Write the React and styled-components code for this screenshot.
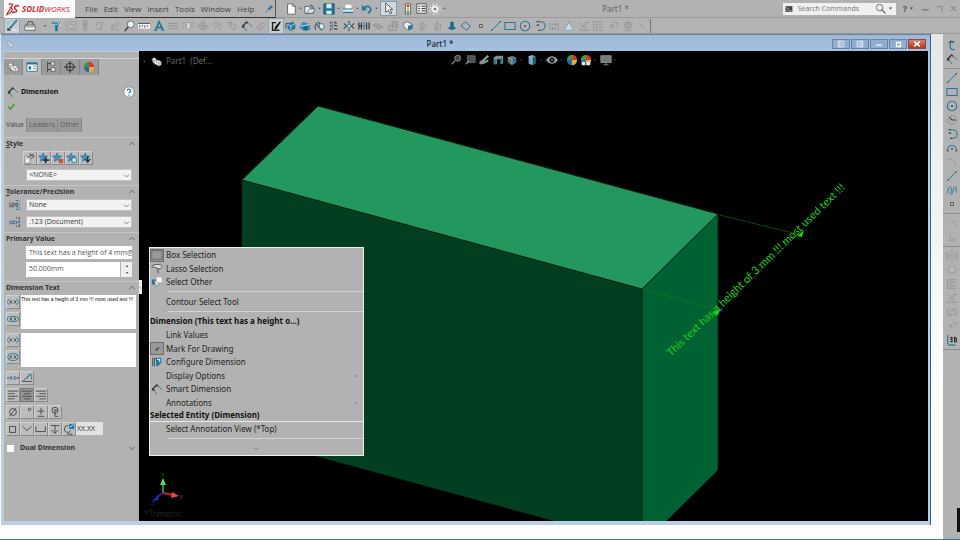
import React from "react";
import styled, { createGlobalStyle, css } from "styled-components";

const blue = "#20789c";
const ink = "#3b3f44";
const faint = "#929292";

// every glyph is drawn on a 14 x 14 grid
const stroke = (d, color = ink, width = 1) => (
  <path d={d} fill="none" stroke={color} strokeWidth={width} />
);

const star = (
  <path
    d="M6 1l1.500 3.500 4 .3-3 2.500.9 4L6 9 2.600 11.300l.9-4L.5 4.800l4-.3z"
    fill="#3e93c0"
    stroke="#23658a"
    strokeWidth=".6"
  />
);

const ball = (
  <>
    <path d="M7 7V1a6 6 0 0 0-6 6z" fill="#3e9b45" />
    <path d="M7 7h6a6 6 0 0 0-6-6z" fill="#d33b2c" />
    <path d="M7 7v6a6 6 0 0 0 6-6z" fill="#e2b23a" />
    <path d="M7 7H1a6 6 0 0 0 6 6z" fill="#2d62b8" />
  </>
);

const glyphs = {
  sketch: (
    <>
      <path d="M1 2h12v1H3v7H1z" fill="#9ec7d8" />
      {stroke("M12 1L5 9", "#2b84ab", 2)}
      {stroke("M2 12l4-4M2 10v2h3", ink, 1.3)}
      {stroke("M7 12h5", "#f4f4f4", 1.3)}
    </>
  ),
  toolbox: (
    <>
      <path d="M1 6h12v6H1z" fill="#f2f2f2" stroke={ink} strokeWidth=".8" />
      {stroke("M3 6l2-4h5l1 4", ink)}
      {stroke("M2 8h10", "#777")}
    </>
  ),
  filter: (
    <>
      <path d="M1 3h11L9 7v6H6V7z" fill={blue} />
      {stroke("M9 3l4 4M3 5h6", "#d9edf5")}
    </>
  ),
  partOff: (
    <>
      <path d="M1 2h12v10H1z" fill="none" stroke="#a0a0a0" />
      <path d="M3 8c0-3 4-5 5-2 3 0 4 2 2 4H6z" fill="#bdbdbd" stroke={faint} />
    </>
  ),
  stackOff: stroke("M5 1h4v4H5zM5 6h4v6H5zM7 3v8", faint),
  bracketOff: stroke("M4 3h5v8H5M3 11h2M3 6V3", faint),
  pencilOff: stroke("M11 2L4 9l-1 3 3-1 6-7M2 8l4-3M8 12h3", faint),
  search: (
    <>
      <circle cx="9" cy="5" r="4" fill="#e9f0f3" stroke={ink} strokeWidth=".8" />
      {stroke("M6 8l-4 5", ink, 1.8)}
    </>
  ),
  measure: (
    <>
      <path d="M0 4h14v6H0z" fill="#f7f7f7" />
      {stroke("M0 4h14M2 6v3M5 6v2M8 6v3M11 6v2", ink, 1)}
    </>
  ),
  letterA: (
    <>
      {stroke("M3 12L7 2l5 10M4 9h6", blue, 2)}
      {stroke("M1 12h4M9 12h4", blue)}
    </>
  ),
  linesOff: stroke("M1 4h12M1 7h12M1 10h12", faint),
  tagOff: (
    <>
      <path d="M5 3h5v6l-2 3-3-3z" fill="#d4d4d4" stroke={faint} />
      {stroke("M2 3v2M2 7v2M12 3v2M12 7v2", faint)}
    </>
  ),
  crossOff: (
    <>
      <circle cx="7" cy="7" r="4" fill="none" stroke={faint} />
      {stroke("M7 1v12M1 7h12", faint)}
    </>
  ),
  angleOff: stroke("M2 6l5-4 5 5M3 11l7-7M9 9l3 3", faint),
  textOff: stroke("M2 3h5M5 2v5M8 4l4 4M3 8l4-2M7 11l5-2", faint),
  dimension: (
    <>
      {stroke("M7 2L2 7", "#222", 1.3)}
      {stroke("M7 2l6 6", blue)}
      {stroke("M2 7l5 6", blue)}
      <path d="M5 2h3v3zM1 6h3v3H1z" fill={ink} />
    </>
  ),
  eraserOff: stroke("M2 9l6-6 4 3-6 6zM5 6l4 3", faint),
  penBox: (
    <>
      {stroke("M2 3h5M3 3v8M2 12h9", "#222", 1.6)}
      <path d="M13 2L8 10l-3 2 1-4 5-6z" fill="#161616" />
    </>
  ),
  cubeBlue: (
    <>
      <path d="M3 5l5-3 4 2v6l-5 3-4-3z" fill={blue} />
      {stroke("M3 5l4 2 5-3M7 7v5", "#b9dcea")}
      {stroke("M1 4v6M1 4h4", ink)}
    </>
  ),
  cubeSmall: (
    <>
      <path d="M1 6l4-4 8 3v7H5l-4-2z" fill="#3c8fb3" />
      <path d="M5 7h5v5H5z" fill="#1b6485" />
      {stroke("M1 6l4 1 8-2", "#d3eaf3")}
    </>
  ),
  rotate: (
    <>
      {stroke("M2 11a6 6 0 0 1 2-8M5 2l6 8M3 5l6 7", ink, 1.2)}
      <path d="M6 5l4-1 2 4-2 3-3-1z" fill="#e6eff2" stroke={blue} />
    </>
  ),
  pattern: (
    <>
      {stroke("M3 2v2M3 6v2M3 10v2M7 2l3 2M7 6l4 1M7 10l4 1", ink, 1.5)}
      {stroke("M5 3v8", blue)}
    </>
  ),
  explode: (
    <>
      <circle cx="7" cy="7" r="2" fill="#d6e6ec" stroke={blue} />
      {stroke("M1 4l3 3-3 3M13 4l-3 3 3 3M7 1v3M7 10v3", ink, 1.2)}
    </>
  ),
  mirror: (
    <>
      {stroke("M1 3v8M4 3v8M1 7h3M13 3v8M10 3v8", ink, 1.5)}
      {stroke("M7 2v10M5 7h5", blue, 1)}
    </>
  ),
  surfaceOff: <path d="M1 6l4-2 8 4-5 3z" fill="#a3a3a3" stroke={faint} />,
  cubeOff: (
    <>
      <path d="M6 2h6v6H6z" fill="#a5a5a5" stroke={faint} />
      {stroke("M2 6h4v6H2zM6 12h5V8", faint)}
    </>
  ),
  cubeWhite: (
    <>
      <path d="M2 4l4-2 6 3v5l-5 2-5-4z" fill="#e8eef0" stroke={ink} strokeWidth=".7" />
      <path d="M7 7l5-2v5l-5 2z" fill={blue} />
    </>
  ),
  foldOff: stroke("M9 2L4 6l3 2-3 3 5 1M8 3v8M11 5v6", faint),
  bevel: (
    <>
      <path d="M5 2h4v5l3 3-5 2-5-2 3-3z" fill={blue} />
      {stroke("M7 2v9", "#0f4e6e")}
    </>
  ),
  plane: stroke("M6 2l6 5-4 5-7-5z", blue, 1.1),
  point: (
    <>
      <path d="M5 5h4v4H5z" fill={ink} />
      <path d="M6 6h2v2H6z" fill="#fff" />
    </>
  ),
  line: (
    <>
      {stroke("M2 12L12 2", blue, 1.1)}
      {stroke("M1 12h2M11 2h2", ink)}
    </>
  ),
  rect: stroke("M1 3h12v8H1z", blue, 1.2),
  circle: (
    <>
      <circle cx="7" cy="7" r="5.500" fill="none" stroke={blue} strokeWidth="1.2" />
      <path d="M6 6h2v2H6z" fill={ink} />
    </>
  ),
  ellipse: (
    <>
      <circle cx="7" cy="7" r="5" fill="none" stroke="#777" strokeDasharray="2 1" />
      {stroke("M4 4l3 3h4", ink, 1.4)}
    </>
  ),
  arc: (
    <>
      {stroke("M4 2h4a5 5 0 0 1 0 10H6", blue, 1.2)}
      {stroke("M3 2h2M3 6h3M5 12h2", ink, 1.5)}
    </>
  ),
  arcTop: (
    <>
      {stroke("M2 9a5 5 0 0 1 10 0", blue, 1.2)}
      <path d="M1 9h2v2H1zM11 9h2v2h-2zM6 7h2v2H6z" fill="#555" />
    </>
  ),
  filletOff: stroke("M2 4c6-1 9 2 9 7", "#a0978f"),
  spline: stroke("M2 11c0-5 2-9 4-7s-2 8 0 8 3-10 5-9 0 5 1 7", blue, 1.1),
  relateOff: stroke("M2 3v9M12 3v9M4 5h6M4 10h6M8 3l2 2-2 2M6 8l-2 2 2 2", faint),
  triangleDots: (
    <path
      d="M7 2l5 10H2z"
      fill="#c7dde6"
      stroke="#5b9ab5"
      strokeDasharray="1 1"
      strokeWidth="1.3"
    />
  ),
  trimOff: stroke("M2 3l9 8M2 11l9-8M2 12h11M8 3h5", faint),
  offsetOff: stroke("M12 2H2v10h10M12 5H5v4h7", faint),
  arrowOff: stroke("M3 6h4v4M7 6L3 10M8 3h4v4", faint),
  globeOff: (
    <>
      <circle cx="7" cy="6" r="4" fill="#aaa" stroke={faint} />
      {stroke("M3 12h8M5 3l5 5", faint)}
    </>
  ),
  slashOff: stroke("M3 3l8 8", faint),
  cornerOff: stroke("M7 3v1M11 5v6M5 5h6", "#9c9c9c"),
  perpOff: stroke("M5 2v9M2 11h7M10 8v4M8 10h4", "#9c9c9c"),
  mirrorOff: stroke("M1 3v8l4-4zM13 3v8L9 7zM7 1v12", faint),
  sphereOff: (
    <circle cx="7" cy="7" r="4" fill="#b9b9b9" stroke={faint} />
  ),
  sketch3d: (
    <>
      {stroke("M2 1v8c0 2 1 4 3 4h6", blue, 1.3)}
      {stroke("M5 4h2v5H5M5 6h2M10 4v5h2V5z", "#222", 1.2)}
    </>
  ),
  hook: (
    <>
      {stroke("M10 3H5v7c0 2 3 3 5 2", blue, 1.5)}
      {stroke("M3 5l3-3 2 3", ink)}
    </>
  ),
  page: (
    <>
      <path d="M3 1h6l3 3v9H3z" fill="#fbfbfb" stroke={ink} strokeWidth=".8" />
      {stroke("M9 1v3h3", ink, 0.8)}
    </>
  ),
  open: (
    <>
      <path d="M1 4h5l1 2h4v6H1z" fill="#f0f4f6" stroke={ink} strokeWidth=".8" />
      <path d="M3 12l3-5h7l-3 5z" fill="#d5e3e9" stroke={ink} strokeWidth=".6" />
      {stroke("M7 2l4 3", blue, 1.6)}
    </>
  ),
  save: (
    <>
      <path d="M1 1h12v12H1z" fill={blue} stroke="#164e66" />
      <path d="M4 1h6v5H4zM4 9h6v4H4z" fill="#dbe8ee" />
    </>
  ),
  print: (
    <>
      <path d="M4 2h7v5H4z" fill="#fff" />
      <path d="M1 7h12v4H1z" fill="#dfe9ed" />
      {stroke("M1 7h11M1 11h12", blue, 1.3)}
    </>
  ),
  undo: (
    <>
      {stroke("M4 5c7-3 10 3 4 7", blue, 2)}
      <path d="M1 2v7l6-1z" fill={blue} />
    </>
  ),
  cursor: (
    <path
      d="M4 1v10l3-2 2 4 1.500-1-2-4h3z"
      fill="#fff"
      stroke={ink}
      strokeWidth=".9"
    />
  ),
  traffic: (
    <>
      <path d="M4 1h6v12H4z" fill="#e9e9e9" stroke={ink} strokeWidth=".8" />
      <circle cx="7" cy="3.500" r="1.500" fill="#d0271d" />
      <circle cx="7" cy="7" r="1.300" fill="#c9a63b" />
      <circle cx="7" cy="10.500" r="1.500" fill="#2c9a3c" />
    </>
  ),
  list: (
    <>
      <path d="M1 1h12v12H1z" fill="#eee" stroke={ink} />
      {stroke("M3 4h2M3 7h2M3 10h2M7 4h5M7 7h5M7 10h5", ink, 1.3)}
    </>
  ),
  gear: (
    <>
      <circle cx="7" cy="7" r="5" fill="#eee" stroke="#eee" strokeDasharray="2 2" strokeWidth="3" />
      <circle cx="7" cy="7" r="5" fill="none" stroke="#777" strokeDasharray="2 1" />
      <circle cx="7" cy="7" r="1.500" fill="#777" />
    </>
  ),
  pin: (
    <>
      <path d="M8 2l4 4-2 0-2 2v2L4 6h2l2-2z" fill="#2878a4" />
      {stroke("M6 8l-4 4", "#2878a4", 1.2)}
    </>
  ),
  part: (
    <>
      <path
        d="M1 4l3-2 3 2v2l2-1 4 2v4l-3 2-7-4z"
        fill="#f2f2f2"
        stroke="#666"
        strokeWidth=".7"
      />
      {stroke("M1 4l3 2v5M4 6l3-2M7 8l3 1v4M7 6v2M10 9l3-2", "#666", 0.7)}
    </>
  ),
  property: (
    <>
      <path d="M1 2h12v10H1z" fill="#fff" stroke={blue} />
      <path d="M1 2h12v2H1zM3 6h3v4H3z" fill={blue} />
      {stroke("M8 6h4M8 9h4", "#777")}
    </>
  ),
  tree: (
    <>
      {stroke("M3 1v12M3 3h4M3 10h4", ink)}
      <path d="M7 1h4v4H7zM7 8h5v4H7z" fill="#e5e5e5" stroke={ink} strokeWidth=".7" />
    </>
  ),
  target: (
    <>
      <circle cx="7" cy="7" r="4.500" fill="none" stroke="#222" />
      {stroke("M7 0v14M0 7h14", "#222")}
    </>
  ),
  ball,
  check: stroke("M2 7l3 4 7-8", "#36a01f", 2.2),
  help: (
    <>
      <circle cx="7" cy="7" r="6" fill="#f7fbfd" stroke="#6f7a80" strokeWidth=".8" />
      {stroke("M5 5.500c0-3 4-2 4 0C9 7 7 7 7 8.500M7 10v1.500", blue, 1.3)}
    </>
  ),
  chevronUp: stroke("M2 9l5-5 5 5", "#555", 1.3),
  chevronDown: stroke("M2 5l5 5 5-5", "#555", 1.3),
  chevronRight: <path d="M5 3l4 4-4 4z" fill="#555" />,
  caret: <path d="M4.500 5.500h5L7 8.500z" fill="#444" />,
  styleDefault: (
    <>
      <path d="M1 5h6v8H1z" fill="#f2f2f2" stroke="#666" strokeWidth=".7" />
      {stroke("M3 8l8-6M6 2l6 3-4 3", ink)}
    </>
  ),
  starAdd: <>{star}{stroke("M9 6v7M6 9.500h7", "#1e3442", 2)}</>,
  starDel: <>{star}<path d="M8 8h5v5H8z" fill="#d84d35" /></>,
  starSave: <>{star}<path d="M7 7h5v5H7z" fill="#d8edf6" stroke={blue} /></>,
  starLoad: <>{star}{stroke("M9 5v7M6 8l3 4 3-4", "#1e3442", 1.5)}</>,
  tolerance: (
    <>
      {stroke("M1 4v6M3 5h3v2H3v2h3M8 5h2v4H8z", ink, 0.9)}
      {stroke("M8 2h4M12 5v2M8 12h4M12 9v2", blue)}
    </>
  ),
  precision: (
    <>
      {stroke("M1 6h3v3H1zM5 6h4v3H5z", blue, 1)}
      {stroke("M8 2h2M12 1v4M8 12h2M12 9v4M10 7h3", ink, 1)}
    </>
  ),
  parenX: (
    <>
      {stroke("M3 3c-3 3-3 5 0 8M11 3c3 3 3 5 0 8", blue, 1)}
      {stroke("M3 5l3 4M6 5L3 9M8 5l3 4M11 5L8 9", ink, 0.9)}
    </>
  ),
  ovalX: (
    <>
      <rect x="1" y="3" width="12" height="8" rx="4" fill="none" stroke={blue} />
      {stroke("M3 5l3 4M6 5L3 9M8 5l3 4M11 5L8 9", ink, 0.9)}
    </>
  ),
  boxX: (
    <>
      {stroke("M3 4h8M3 10h8M2 4c-2 2-2 4 0 6M12 4c2 2 2 4 0 6", blue, 1)}
      {stroke("M3 5l3 4M6 5L3 9M8 5l3 4M11 5L8 9", ink, 0.9)}
    </>
  ),
  centerX: (
    <>
      {stroke("M0 7h3M11 7h3", ink, 1.2)}
      {stroke("M4 5l2 4M6 5L4 9M8 5l2 4M10 5L8 9", blue, 1)}
    </>
  ),
  offsetText: (
    <>
      {stroke("M1 11h12M3 10l8-8", ink)}
      {stroke("M7 8l3-5h2v6", blue)}
    </>
  ),
  alignLeft: stroke("M1 2.500h12M1 5.500h8M1 8.500h12M1 11.500h8", "#444"),
  alignCenter: stroke("M1 2.500h12M3 5.500h8M1 8.500h12M3 11.500h8", "#444"),
  alignRight: stroke("M1 2.500h12M5 5.500h8M1 8.500h12M5 11.500h8", "#444"),
  diameter: (
    <>
      <circle cx="7" cy="7" r="4" fill="none" stroke={ink} />
      {stroke("M3 12l8-10", ink)}
    </>
  ),
  degree: <circle cx="10" cy="4" r="1.500" fill="none" stroke={ink} />,
  plusMinus: stroke("M7 2v8M3 6h8M3 12h8", ink),
  centerline: (
    <>
      <circle cx="7" cy="5" r="3.500" fill="none" stroke={ink} />
      {stroke("M6 5h4M7 4v8h4", ink)}
    </>
  ),
  square: stroke("M3 4h7v7H3z", ink),
  countersink: stroke("M2 4l5 5 5-5", ink),
  counterbore: stroke("M1 4v6h11V4", ink),
  depth: stroke("M2 3h10M7 3v9M3 8l4 4 4-4", ink),
  more: (
    <>
      {stroke("M6 3a4 4 0 1 0 3 6M5 13h6", ink)}
      <path d="M7 1h6v6H7z" fill={blue} />
      {stroke("M8 5l4-3", "#fff")}
    </>
  ),
  boxSelect: (
    <path d="M1 2h12v10H1z" fill="none" stroke="#333" strokeDasharray="1 1" />
  ),
  lasso: (
    <>
      <path d="M1 4c3-4 13-2 12 0S9 8 7 6 1 6 1 4z" fill="#dfe3e5" stroke={ink} />
      {stroke("M7 6c3 2-1 4 2 6", ink)}
    </>
  ),
  selectOther: (
    <>
      <path d="M1 4h7v6H1z" fill={blue} />
      <path d="M6 1h7v7H6z" fill="#f2f5f6" stroke="#999" strokeWidth=".6" />
      <path d="M4 5l6 5-3 0-1 3z" fill="#fff" stroke="#777" strokeWidth=".6" />
    </>
  ),
  configure: (
    <>
      {stroke("M2 2v10M4 2v10", ink)}
      <path d="M5 2h7v6l-4 4H6V7z" fill={blue} />
      {stroke("M7 4h3v3", "#cfe7f1", 1.4)}
    </>
  ),
  viewSearch: (
    <>
      <circle cx="9" cy="5" r="3.500" fill="#3f464b" stroke="#8d9498" />
      {stroke("M6 8l-4 4", "#8d9498", 1.5)}
    </>
  ),
  viewArea: (
    <>
      <path d="M4 2h9v8H4z" fill="#4c5357" stroke="#888" strokeDasharray="2 1" />
      {stroke("M6 8l-4 4", "#8d9498", 1.5)}
    </>
  ),
  viewPrev: (
    <>
      {stroke("M12 2L2 11", "#9aa2a6", 2.4)}
      <path d="M2 8h6l4-2v3l-6 3H2z" fill="#848d92" />
    </>
  ),
  viewSection: (
    <>
      <path d="M2 4l3-2h8v9l-3 1V6H6v6H2z" fill="#7f8c92" />
      <path d="M3 6h2v6H3zM10 5h2v6h-2z" fill={blue} />
    </>
  ),
  viewCube: (
    <>
      <path d="M2 4l5-2 5 2v6l-5 3-5-3z" fill="#66757c" />
      <path d="M7 6l4-1v5l-4 2z" fill={blue} />
      {stroke("M2 4l5 2v6", "#a8b0b4")}
    </>
  ),
  viewStyle: (
    <>
      <path d="M3 3l4-2 4 2v8l-4 2-4-2z" fill="#6fa2b8" />
      <path d="M7 4l4-1v8l-4 2z" fill="#1e5f7c" />
      {stroke("M3 3l4 1v8", "#c0cacd")}
    </>
  ),
  eye: (
    <>
      <path d="M0 7c4-6 10-6 14 0-4 6-10 6-14 0z" fill="#989fa3" />
      <circle cx="7" cy="7" r="3" fill="#15191c" />
      <circle cx="7" cy="7" r="1" fill="#989fa3" />
    </>
  ),
  scene: (
    <>
      {ball}
      <path d="M2 9h4v4H2zM8 9h4v4H8z" fill="#dfe3e5" />
    </>
  ),
  monitor: (
    <>
      <path d="M1 2h12v8H1z" fill="#73797c" stroke="#929799" />
      {stroke("M7 10v2M4 12.500h6", "#85898c")}
    </>
  ),
  dockLeft: stroke("M2 2h10v10H2zM5 2v10M9 5L7 7l2 2", "#f5f9fc", 1.4),
  dockRight: stroke("M2 2h10v10H2zM9 2v10M5 5l2 2-2 2", "#f5f9fc", 1.4),
  minimize: stroke("M2 9h10", "currentColor", 2),
  maximize: stroke("M3 3h8v8H3z", "currentColor", 2.6),
  restore: stroke("M3 4h8v7", "currentColor", 1.2),
  close: stroke("M3 3l8 8M11 3l-8 8", "currentColor", 1.5),
  closeBold: stroke("M2 3l10 8M12 3L2 11", "currentColor", 2.8),
  terminal: (
    <>
      <path d="M1 2h12v10H1z" fill="#444" />
      {stroke("M3 4l3 3-3 3M7 10h4", "#eee", 1.2)}
    </>
  ),
};

const Svg = styled.svg`
  display: block;
  flex: none;
  width: ${(p) => p.$size}px;
  height: ${(p) => p.$size}px;
`;

const Icon = ({ name, size = 12 }) => (
  <Svg $size={size} viewBox="0 0 14 14" aria-hidden="true">
    {glyphs[name]}
  </Svg>
);

const sketchTools = [
  "partOff", "stackOff", "bracketOff", "pencilOff", "search", "measure",
  "letterA", "linesOff", "tagOff", "crossOff", "angleOff", "textOff",
  "dimension", "eraserOff", "penBox", "cubeBlue", "cubeSmall", "rotate",
  "pattern", "explode", "mirror", "surfaceOff", "cubeOff", "cubeWhite",
  "foldOff", "foldOff", "bevel", "plane", "point", "line", "rect", "circle",
  "arc", "relateOff", "triangleDots", "trimOff", "offsetOff", "arrowOff",
  "globeOff", "slashOff",
];

const sideTools = [
  ["hook", "dimension"],
  ["line", "rect", "circle", "ellipse", "arc", "arcTop", "filletOff", "line", "spline", "point"],
  ["cornerOff", "perpOff"],
  ["mirrorOff", "sphereOff", "offsetOff", "trimOff", "relateOff", "arrowOff", "sketch3d"],
];

const quickTools = ["page", "open", "save", "print", "undo"];
const menus = ["File", "Edit", "View", "Insert", "Tools", "Window", "Help"];
const dimensionText = "This text has a height of 3 mm !!! most used text !!!";

const Section = ({ title, open = true, children }) => (
  <Group>
    <GroupHead>
      <h3>{title}</h3>
      <PlainButton aria-label="Toggle section">
        <Icon name={open ? "chevronUp" : "chevronDown"} size={8} />
      </PlainButton>
    </GroupHead>
    {children}
  </Group>
);

const Picker = ({ label, value }) => (
  <PickerBox>
    <select aria-label={label} defaultValue={value}>
      <option>{value}</option>
    </select>
    <Icon name="chevronDown" size={7} />
  </PickerBox>
);

const Tools = ({ names, pressed }) => (
  <ToolRow>
    {names.map((name) => (
      <ToolButton key={name} aria-label={name} $pressed={name === pressed}>
        <Icon name={name} size={12} />
      </ToolButton>
    ))}
  </ToolRow>
);

const PropertyPanel = () => (
  <Panel>
    <Grip />
    <PanelTabs>
      {["part", "property", "tree", "target", "ball"].map((name) => (
        <PanelTab key={name} aria-label={name} $active={name === "property"}>
          <Icon name={name} />
        </PanelTab>
      ))}
    </PanelTabs>
    <PanelTitle>
      <Icon name="dimension" />
      <h2>Dimension</h2>
      <PlainButton aria-label="Help">
        <Icon name="help" />
      </PlainButton>
    </PanelTitle>
    <Accept aria-label="OK">
      <Icon name="check" size={9} />
    </Accept>
    <ValueTabs>
      <ValueTab $active>Value</ValueTab>
      <ValueTab>Leaders</ValueTab>
      <ValueTab>Other</ValueTab>
    </ValueTabs>

    <Section title={<><u>S</u>tyle</>}>
      <StyleTools>
        <Tools names={["styleDefault", "starAdd", "starDel", "starSave", "starLoad"]} />
      </StyleTools>
      <Indent>
        <Picker label="Style" value="<NONE>" />
      </Indent>
    </Section>

    <Section title={<><u>T</u>olerance/Precision</>}>
      <Field>
        <Icon name="tolerance" />
        <Picker label="Tolerance type" value="None" />
      </Field>
      <Field>
        <Icon name="precision" />
        <Picker label="Unit precision" value=".123 (Document)" />
      </Field>
    </Section>

    <Section title="Primary Value">
      <Indent>
        <TextBox aria-label="Name" defaultValue="This text has a height of 4 mm@Boss" />
        <Spinner>
          <TextBox aria-label="Value" defaultValue="50.000mm" />
          <Steps>
            <PlainButton aria-label="Increase">▴</PlainButton>
            <PlainButton aria-label="Decrease">▾</PlainButton>
          </Steps>
        </Spinner>
      </Indent>
    </Section>

    <Section title="Dimension Text">
      <TextRow>
        <Stack>
          <ToolButton aria-label="Add parentheses"><Icon name="parenX" size={12} /></ToolButton>
          <ToolButton aria-label="Inspection dimension"><Icon name="boxX" size={12} /></ToolButton>
        </Stack>
        <Note aria-label="Dimension text" defaultValue={dimensionText} />
      </TextRow>
      <TextRow>
        <Stack>
          <ToolButton aria-label="Center dimension"><Icon name="parenX" size={12} /></ToolButton>
          <ToolButton aria-label="Oval dimension"><Icon name="ovalX" size={12} /></ToolButton>
        </Stack>
        <Note aria-label="Dimension text below" />
      </TextRow>
      <SymbolRows>
        <Tools names={["centerX", "offsetText"]} />
        <Tools names={["alignLeft", "alignCenter", "alignRight"]} pressed="alignCenter" />
        <Tools names={["diameter", "degree", "plusMinus", "centerline"]} />
        <ToolRow>
          <Tools names={["square", "countersink", "counterbore", "depth", "more"]} />
          <Format aria-label="Format" defaultValue="XX.XX" />
        </ToolRow>
      </SymbolRows>
    </Section>

    <DualRow>
      <label>
        <input type="checkbox" />
        Dual Dimension
      </label>
      <PlainButton aria-label="Toggle dual dimension">
        <Icon name="chevronDown" size={8} />
      </PlainButton>
    </DualRow>
  </Panel>
);

const Model = () => (
  <Drawing viewBox="139 51 789 470" preserveAspectRatio="xMinYMin slice">
    <polygon points="318,106 718,214 642,289 242,180" fill="#22985f" />
    <polygon points="242,180 642,289 642,545 242,436" fill="#013f20" />
    <polygon points="642,289 718,214 718,470 642,545" fill="#006232" />
    <path
      d="M242 180L642 289L718 214M642 289V545M242 180L318 106L718 214V470"
      fill="none"
      stroke="#06240f"
    />
    <g stroke="#128012" fill="none">
      <path d="M643 289L717 310M720 215L801 235" strokeDasharray="2 1" strokeWidth=".8" />
      <path d="M710 320L803 229" strokeWidth=".7" />
    </g>
    <path d="M721 309l-9 3 5 4zM797 236l7-6-2 7z" fill="#16d016" />
    <circle cx="721" cy="310" r="1.500" fill="#1d3fc0" />
    <ModelText transform="translate(671 357) rotate(-44)">{dimensionText}</ModelText>

    <g strokeWidth="2">
      <path d="M163 493V484" stroke="#22902c" />
      <path d="M163 493l10 2" stroke="#c62222" />
      <path d="M163 493l-6 4" stroke="#2424b4" />
    </g>
    <path d="M160 485l3-7 3 7z" fill="#5fd267" />
    <path d="M172 492l7 4-8 2z" fill="#ee4545" />
    <path d="M159 495l-1 5-6 1z" fill="#2c2ccc" />
    <AxisText x="161" y="477" fill="#125c18">Y</AxisText>
    <AxisText x="179" y="499" fill="#a01717">X</AxisText>
    <AxisText x="151" y="505" fill="#2020a0">Z</AxisText>
    <ViewName x="144" y="517">*Trimetric</ViewName>
  </Drawing>
);

const SelectionMenu = () => (
  <Menu role="menu">
    <MenuItem $icon>
      <Marker $boxed><Icon name="boxSelect" /></Marker>Box Selection
    </MenuItem>
    <MenuItem>
      <Marker><Icon name="lasso" /></Marker>Lasso Selection
    </MenuItem>
    <MenuItem $icon>
      <Marker><Icon name="selectOther" /></Marker>Select Other
    </MenuItem>
    <MenuRule />
    <MenuItem $icon><Marker />Contour Select Tool</MenuItem>
    <MenuRule />
    <MenuHead>Dimension (This text has a height o...)</MenuHead>
    <MenuItem $icon><Marker />Link Values</MenuItem>
    <MenuItem><Marker $boxed>✔</Marker>Mark For Drawing</MenuItem>
    <MenuItem $icon>
      <Marker><Icon name="configure" /></Marker>Configure Dimension
    </MenuItem>
    <MenuItem><Marker />Display Options<Icon name="chevronRight" size={4} /></MenuItem>
    <MenuItem $icon>
      <Marker><Icon name="dimension" /></Marker>Smart Dimension
    </MenuItem>
    <MenuItem><Marker />Annotations<Icon name="chevronRight" size={4} /></MenuItem>
    <MenuHead $ruled>Selected Entity (Dimension)</MenuHead>
    <MenuItem $icon><Marker />Select Annotation View (*Top)</MenuItem>
    <MenuRule />
    <MenuMore aria-label="More">
      <Icon name="chevronDown" size={5} />
    </MenuMore>
  </Menu>
);

const Header = () => (
  <MenuBar>
    <Brand>
      <Logo>
        <svg viewBox="0 0 16 15" aria-hidden="true">
          <path
            d="M3 2c5-1 6 1 2 4 4 1 2 6-4 8 1-3 3-5 4-7"
            fill="none"
            stroke="#d3222a"
            strokeWidth="1.400"
          />
          <path
            d="M15 4c-4-1-7 1-4 4 3 2 0 4-4 3"
            fill="none"
            stroke="#d3222a"
            strokeWidth="1.700"
          />
        </svg>
        <b>SOLID</b>WORKS
      </Logo>
      <Menus>
        {menus.map((name) => (
          <PlainButton key={name}>{name}</PlainButton>
        ))}
      </Menus>
      <PlainButton aria-label="Pin"><Icon name="pin" size={11} /></PlainButton>
    </Brand>
    <QuickTools>
      {quickTools.map((name) => (
        <PlainButton key={name} aria-label={name}>
          <Icon name={name} /><Icon name="caret" size={7} />
        </PlainButton>
      ))}
      <CursorButton aria-label="Select">
        <Icon name="cursor" size={13} />
      </CursorButton>
      <PlainButton aria-label="Rebuild"><Icon name="traffic" /></PlainButton>
      <PlainButton aria-label="File properties"><Icon name="list" size={11} /></PlainButton>
      <PlainButton aria-label="Options">
        <Icon name="gear" /><Icon name="caret" size={7} />
      </PlainButton>
    </QuickTools>
    <FileName>Part1 *</FileName>
    <SearchBox>
      <Icon name="terminal" size={8} />
      <input aria-label="Search Commands" placeholder="Search Commands" />
      <PlainButton aria-label="Search">
        <LensIcon viewBox="0 0 12 12" aria-hidden="true">
          <circle cx="5" cy="5" r="3.500" fill="none" stroke="#666" />
          <path d="M7.500 7.500l4 4" stroke="#666" strokeWidth="1.300" />
        </LensIcon>
        <Icon name="caret" size={9} />
      </PlainButton>
    </SearchBox>
    <AppControls>
      <PlainButton aria-label="Help">
        <strong>?</strong><Icon name="caret" size={9} />
      </PlainButton>
      <PlainButton aria-label="Minimize"><Icon name="minimize" size={9} /></PlainButton>
      <PlainButton aria-label="Restore"><Icon name="restore" size={9} /></PlainButton>
      <PlainButton aria-label="Close"><Icon name="close" size={9} /></PlainButton>
    </AppControls>
  </MenuBar>
);

export default function App() {
  return (
    <Shell>
      <GlobalStyle />
      <Header />
      <Toolbar>
        <MainTools>
          <ToolSlot $lit aria-label="Sketch"><Icon name="sketch" size={13} /></ToolSlot>
          <PlainButton aria-label="Toolbox">
            <Icon name="toolbox" size={12} />
          </PlainButton>
          <Icon name="caret" size={8} />
        </MainTools>
        <SketchTools>
          <ToolSlot aria-label="Filter"><Icon name="filter" /></ToolSlot>
          {sketchTools.map((name, i) => (
            <ToolSlot key={i} aria-label={name} $lit={name === "penBox"}>
              <Icon name={name} />
            </ToolSlot>
          ))}
        </SketchTools>
      </Toolbar>

      <Body>
        <Desk>
          <DocWindow>
            <TitleBar>
              <Icon name="part" size={8} />
              <h1>Part1 *</h1>
              <WindowButtons>
                <WindowButton aria-label="Dock left"><Icon name="dockLeft" size={8} /></WindowButton>
                <WindowButton aria-label="Dock right"><Icon name="dockRight" size={8} /></WindowButton>
                <WindowButton aria-label="Minimize"><Icon name="minimize" size={8} /></WindowButton>
                <WindowButton aria-label="Maximize"><Icon name="maximize" size={7} /></WindowButton>
                <WindowButton aria-label="Close" $danger><Icon name="closeBold" size={8} /></WindowButton>
              </WindowButtons>
            </TitleBar>
            <DocBody>
              <PropertyPanel />
              <Canvas>
                <Model />
                <TreeRoot>
                  <Icon name="chevronRight" size={5} />
                  <Icon name="part" size={11} />
                  Part1&nbsp; (Def...
                </TreeRoot>
                <ViewTools>
                  {["viewSearch", "viewArea", "viewPrev", "viewSection"].map((name) => (
                    <PlainButton key={name} aria-label={name}><Icon name={name} /></PlainButton>
                  ))}
                  {["viewCube", "viewStyle", "eye"].map((name) => (
                    <PlainButton key={name} aria-label={name}>
                      <Icon name={name} /><Icon name="caret" size={6} />
                    </PlainButton>
                  ))}
                  <PlainButton aria-label="Edit appearance"><Icon name="ball" /></PlainButton>
                  {["scene", "monitor"].map((name) => (
                    <PlainButton key={name} aria-label={name}>
                      <Icon name={name} /><Icon name="caret" size={6} />
                    </PlainButton>
                  ))}
                </ViewTools>
                <Splitter aria-label="Collapse panel">‹</Splitter>
                <SelectionMenu />
              </Canvas>
            </DocBody>
          </DocWindow>
        </Desk>
        <SideBar>
          {sideTools.map((group, i) => (
            <SideGroup key={i}>
              {group.map((name, j) => (
                <SideButton key={j} aria-label={name}><Icon name={name} size={12} /></SideButton>
              ))}
            </SideGroup>
          ))}
          <SideHandle />
        </SideBar>
      </Body>
    </Shell>
  );
}

const GlobalStyle = createGlobalStyle`
  * {
    box-sizing: border-box;
  }

  body {
    margin: 0;
    background: #fff;
    color: #222;
    font-family: "Noto Sans", "Open Sans", sans-serif;
    font-size: 8px;
    line-height: 12px;
  }

  h1, h2, h3 {
    margin: 0;
    font-size: inherit;
  }

  button, input, select, textarea {
    margin: 0;
    padding: 0;
    border: 0;
    border-radius: 0;
    background: none;
    color: inherit;
    font: inherit;
  }
`;

const Shell = styled.div`
  display: flex;
  flex-direction: column;
  height: 100vh;
  border-bottom: 1px solid #2f8094;
`;

const PlainButton = styled.button`
  display: flex;
  align-items: center;
  justify-content: center;
`;

const MenuBar = styled.header`
  display: flex;
  flex: none;
  height: 18px;
  padding-left: 4px;
  background: #b2b2b2;
  border-bottom: 1px solid #999;
  color: #444;
`;

const Brand = styled.div`
  display: flex;
  align-items: center;
  gap: 10px;
  height: 18px;
  border-right: 1px solid #555;
  border-bottom: 1px solid #333;
`;

const Logo = styled.div`
  display: flex;
  align-items: center;
  width: 71px;
  height: 18px;
  padding-left: 2px;
  background: #fdfdfd;
  color: #cf2b30;
  font-family: "Open Sans", sans-serif;
  font-size: 8px;
  font-style: italic;

  svg {
    width: 14px;
    height: 14px;
    margin-right: 2px;
  }
`;

const Menus = styled.nav`
  display: flex;
  gap: 6px;
  font-family: "Open Sans", sans-serif;
`;

const QuickTools = styled.div`
  display: flex;
  align-items: center;
  padding-left: 9px;

  ${PlainButton}:nth-last-child(-n + 3) {
    margin-left: 2px;
  }
`;

const CursorButton = styled.button`
  display: flex;
  align-items: center;
  height: 15px;
  padding: 0 1px;
  background: #d2d9dd;
  border: 1px solid #7c9aab;
  margin-right: 3px;
`;

const FileName = styled.div`
  flex: 1;
  align-self: center;
  color: #666;
  text-align: center;
`;

const SearchBox = styled.div`
  display: flex;
  align-items: center;
  align-self: center;
  width: 113px;
  height: 12px;
  padding: 0 1px 0 2px;
  background: #eef0f2;

  input {
    flex: 1;
    min-width: 0;
    padding-left: 5px;
    font-family: "Open Sans", sans-serif;
    font-size: 7px;
    outline: 0;
  }
`;

const LensIcon = styled.svg`
  width: 11px;
  height: 11px;
`;

const AppControls = styled.div`
  display: flex;
  align-items: center;
  gap: 5px;
  padding: 0 2px 0 7px;
  color: #777;

  strong {
    color: #555;
    font-size: 9px;
  }
`;

const Toolbar = styled.div`
  display: flex;
  flex: none;
  align-items: center;
  height: 16px;
  padding-left: 5px;
  background: #b3b3b3;
  border-bottom: 1px solid #999;
`;

const ToolSlot = styled.button`
  display: flex;
  align-items: center;
  justify-content: center;
  width: 14px;
  height: 14px;
  ${(p) =>
    p.$lit &&
    css`
      background: #c8ced1;
      box-shadow: 0 0 0 1px #8fa5b0;
    `}
`;

const MainTools = styled.div`
  display: flex;
  align-items: center;
  gap: 5px;
`;

const SketchTools = styled.div`
  display: flex;
  justify-content: space-between;
  width: 63%;
  border-right: 1px solid #777;
`;

const Body = styled.div`
  display: flex;
  flex: 1;
  min-height: 0;
`;

const Desk = styled.main`
  display: flex;
  flex: 1;
  min-width: 0;
  padding: 0 12px 14px 1px;
  background: linear-gradient(#e6e6e6, #ffffff 75%);
`;

const DocWindow = styled.section`
  display: flex;
  flex: 1;
  flex-direction: column;
  min-width: 0;
  padding: 0 2px 4px 3px;
  background: linear-gradient(#9fb8d8 0, #a6c1e0 16px, #b9cfe6 50px);
  border-top: 1px solid #66839c;
  border-right: 1px solid #2d6987;
`;

const TitleBar = styled.div`
  display: flex;
  flex: none;
  align-items: center;
  height: 16px;
  padding: 2px 0 0 2px;

  h1 {
    flex: 1;
    padding-left: 34px;
    color: #1c2530;
    font-weight: 500;
    text-align: center;
  }
`;

const WindowButtons = styled.div`
  display: flex;
  gap: 1px;
  padding-right: 2px;
`;

const WindowButton = styled.button`
  display: flex;
  align-items: center;
  justify-content: center;
  width: 18px;
  height: 10px;
  background: ${(p) => (p.$danger ? "linear-gradient(#d58472, #b83520)" : "#91add0")};
  border: 1px solid ${(p) => (p.$danger ? "#9b4438" : "#6685aa")};
  color: #fff;
`;

const DocBody = styled.div`
  display: flex;
  flex: 1;
  min-height: 0;
`;

const Panel = styled.aside`
  flex: none;
  width: 135px;
  background: #b2b2b2;
  color: #333;
  font-size: 7px;
  line-height: 10px;

  button, input, select {
    font-family: "Open Sans", sans-serif;
  }
`;

const Grip = styled.div`
  height: 8px;
  border-top: 1px solid #c9c9c9;
  border-bottom: 1px solid #d5d5d5;
`;

const PanelTabs = styled.div`
  display: flex;
`;

const PanelTab = styled.button`
  display: flex;
  align-items: center;
  justify-content: center;
  width: 19px;
  height: 16px;
  background: ${(p) => (p.$active ? "#b8b8b8" : "#9b9b9b")};
  border-right: 1px solid #868686;
`;

const PanelTitle = styled.div`
  display: flex;
  align-items: center;
  gap: 2px;
  padding: 11px 4px 0 3px;

  h2 {
    flex: 1;
    color: #111;
  }
`;

const Accept = styled.button`
  display: block;
  margin: 4px 0 0 3px;
`;

const ValueTabs = styled.div`
  display: flex;
  margin: 7px 0 5px;
`;

const ValueTab = styled.button`
  height: 14px;
  padding: 0 2px;
  background: ${(p) => (p.$active ? "#b2b2b2" : "#9a9a9a")};
  border-right: 1px solid #888;
  color: ${(p) => (p.$active ? "#444" : "#5c5c5c")};
`;

const Group = styled.section`
  padding: 0 3px 4px 2px;
  border-top: 1px solid #c6c6c6;
`;

const GroupHead = styled.div`
  display: flex;
  align-items: center;
  justify-content: space-between;
  height: 11px;
  margin-bottom: 2px;
`;

const StyleTools = styled.div`
  padding: 0 0 4px 17px;
`;

const Indent = styled.div`
  display: flex;
  flex-direction: column;
  gap: 3px;
  padding: 0 4px 0 20px;
`;

const Field = styled.div`
  display: flex;
  align-items: center;
  gap: 5px;
  padding: 0 4px 0 3px;

  & + & {
    margin-top: 5px;
  }
`;

const PickerBox = styled.div`
  position: relative;
  flex: 1;

  select {
    display: block;
    width: 100%;
    height: 12px;
    padding-left: 2px;
    background: #f2f2f2;
    border: 1px solid #c2c2c2;
    appearance: none;
  }

  svg {
    position: absolute;
    top: 3px;
    right: 2px;
    pointer-events: none;
  }
`;

const ToolRow = styled.div`
  display: flex;
`;

const ToolButton = styled.button`
  display: flex;
  align-items: center;
  justify-content: center;
  width: 14px;
  height: 14px;
  background: ${(p) => (p.$pressed ? "#999" : "#bdbdbd")};
  border: 1px solid;
  border-color: ${(p) => (p.$pressed ? "#777" : "#d0d0d0 #8a8a8a #8a8a8a #d0d0d0")};
`;

const TextBox = styled.input`
  width: 100%;
  min-width: 0;
  height: 13px;
  padding-left: 3px;
  background: #fff;
  color: #555;
`;

const Spinner = styled.div`
  display: flex;
  gap: 1px;

  ${TextBox} {
    height: 15px;
    padding-bottom: 2px;
  }
`;

const Steps = styled.div`
  flex: none;
  width: 11px;
  background: #eee;
  font-size: 4px;

  ${PlainButton} {
    width: 11px;
    height: 7px;
    line-height: 7px;
  }
`;

const TextRow = styled.div`
  display: flex;
  gap: 1px;
  height: 34px;

  & + & {
    margin-top: 4px;
  }
`;

const Stack = styled.div`
  display: flex;
  flex-direction: column;
  gap: 3px;
`;

const Note = styled.textarea`
  flex: 1;
  min-width: 0;
  background: #fff;
  color: #111;
  font-family: "Liberation Sans", sans-serif;
  font-size: 5px;
  line-height: 8px;
  white-space: pre;
  overflow: hidden;
  resize: none;
`;

const SymbolRows = styled.div`
  display: flex;
  flex-direction: column;
  gap: 3px;
  padding-top: 4px;
`;

const Format = styled.input`
  width: 27px;
  height: 13px;
  padding-left: 1px;
  background: #e2e2e2;
`;

const DualRow = styled.div`
  display: flex;
  align-items: center;
  justify-content: space-between;
  padding: 3px 3px 2px;
  font-weight: 700;

  label {
    display: flex;
    align-items: center;
    gap: 6px;
  }

  input {
    width: 7px;
    height: 7px;
    background: #fff;
    appearance: none;
  }
`;

const Canvas = styled.div`
  position: relative;
  flex: 1;
  min-width: 0;
  background: #000;
  overflow: hidden;
`;

const Drawing = styled.svg`
  display: block;
  width: 100%;
  height: 100%;
`;

const ModelText = styled.text`
  fill: #1ccc1c;
  font-family: Lato, sans-serif;
  font-size: 11px;
`;

const AxisText = styled.text`
  font-size: 6px;
`;

const ViewName = styled.text`
  fill: #242424;
  font-size: 8px;
`;

const TreeRoot = styled.div`
  position: absolute;
  top: 4px;
  left: 3px;
  display: flex;
  align-items: center;
  gap: 4px;
  color: #666;
`;

const ViewTools = styled.div`
  position: absolute;
  top: 3px;
  left: 0;
  right: 0;
  display: flex;
  justify-content: center;
  gap: 2px;
`;

const Splitter = styled.button`
  position: absolute;
  top: 229px;
  left: 0;
  width: 3px;
  height: 14px;
  background: #eee;
  color: #555;
  font-size: 6px;
  line-height: 12px;
`;

const Menu = styled.div`
  position: absolute;
  top: 196px;
  left: 10px;
  width: 215px;
  background: #b2b2b2;
  border: 1px solid #eee;
`;

const MenuItem = styled.button.attrs({ role: "menuitem" })`
  display: flex;
  align-items: center;
  width: 100%;
  height: ${(p) => (p.$icon ? 14 : 13)}px;
  padding-right: 5px;
  white-space: nowrap;

  > svg {
    margin-left: auto;
  }
`;

const Marker = styled.span`
  display: flex;
  align-items: center;
  justify-content: center;
  width: 14px;
  height: 13px;
  margin-right: 2px;
  font-size: 6px;
  ${(p) =>
    p.$boxed &&
    css`
      background: #999;
      border: 1px solid #6c6c6c;
    `}
`;

const MenuRule = styled.div`
  height: 1px;
  margin: 2px 0 3px 18px;
  background: #d2d2d2;
`;

const MenuHead = styled.div`
  height: 13px;
  border-bottom: 1px solid ${(p) => (p.$ruled ? "#e8e8e8" : "transparent")};
  color: #111;
  font-weight: 700;
  white-space: nowrap;
`;

const MenuMore = styled.button`
  display: flex;
  align-items: center;
  justify-content: center;
  width: 100%;
  height: 13px;
`;

const SideBar = styled.aside`
  position: relative;
  flex: none;
  width: 17px;
  padding-top: 4px;
  background: #b2b2b2;
`;

const SideGroup = styled.div`
  display: flex;
  flex-direction: column;
  align-items: center;
  padding-bottom: 2px;
  margin-bottom: 2px;
  border-bottom: 1px solid #8d8d8d;
`;

const SideButton = styled.button`
  display: flex;
  align-items: center;
  height: 14px;
`;

const SideHandle = styled.div`
  position: absolute;
  right: 0;
  bottom: 7px;
  width: 3px;
  height: 24px;
  background: #111;
`;
